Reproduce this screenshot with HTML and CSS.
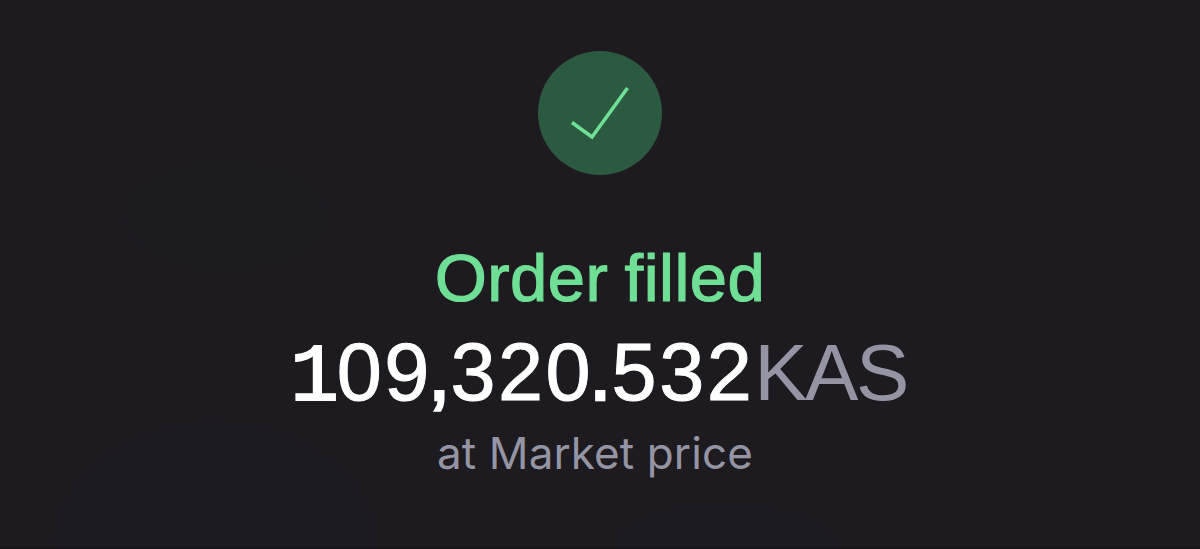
FILE: index.html
```html
<!DOCTYPE html>
<html lang="en">
<head>
<meta charset="utf-8">
<title>Order filled</title>
<link rel="stylesheet" href="styles.css">
</head>
<body>
<main class="confirmation">
  <div class="badge">
    <svg class="check" viewBox="0 0 124 124" fill="none" aria-hidden="true"><path d="M34 71.5 54 86 89.5 37"/></svg>
  </div>
  <h1 class="status">Order filled</h1>
  <p class="amount"><span class="value"><span class="one">1</span>0<span class="tight">9</span><span class="mark">,</span>32<span class="tight">0</span><span class="mark">.</span>532</span><span class="unit">KAS</span></p>
  <p class="detail">at Market price</p>
</main>
</body>
</html>
```

FILE: styles.css
```css
body {
  margin: 0;
  background: #1d1a20;
  font-family: "Liberation Sans", sans-serif;
}
.confirmation {
  box-sizing: border-box;
  height: 549px;
  padding-top: 51px;
  display: flex;
  flex-direction: column;
  align-items: center;
  overflow: hidden;
  white-space: nowrap;
  border-bottom: 2px solid #17141a;
  background:
    radial-gradient(106px 56px at 226px 216px, #1c1b20 92%, transparent),
    radial-gradient(165px 130px at 215px 549px, #1c1b21 92%, transparent),
    radial-gradient(115px 45px at 725px 549px, #1c1b21 92%, transparent);
}
.badge {
  width: 124px;
  height: 124px;
  border-radius: 50%;
  background: #2c5a41;
}
.check {
  display: block;
  stroke: #6ee096;
  stroke-width: 3.5;
}
.status {
  margin: 63px 0 0;
  font-size: 67px;
  line-height: 80px;
  font-weight: 400;
  letter-spacing: 0.5px;
  word-spacing: -3px;
  color: #6fdf95;
  -webkit-text-stroke: 1.2px #6fdf95;
}
.amount {
  margin: 9px 3px 0 0;
  font-size: 81px;
  line-height: 90px;
  color: #fff;
}
.value {
  letter-spacing: 2.5px;
  -webkit-text-stroke: 1px #fff;
}
.one {
  font-family: "Liberation Mono", monospace;
  letter-spacing: -2px;
  -webkit-text-stroke: 2px #fff;
}
.tight {
  letter-spacing: -1.5px;
}
.mark {
  letter-spacing: 0;
  -webkit-text-stroke: 2.5px #fff;
}
.unit {
  font-size: 80px;
  letter-spacing: -2.5px;
  color: #9494a4;
}
.detail {
  margin: 2px 10px 0 0;
  font-family: Inter, "Liberation Sans", sans-serif;
  font-size: 44px;
  line-height: 54px;
  letter-spacing: 0.1px;
  color: #9494a4;
}
```
